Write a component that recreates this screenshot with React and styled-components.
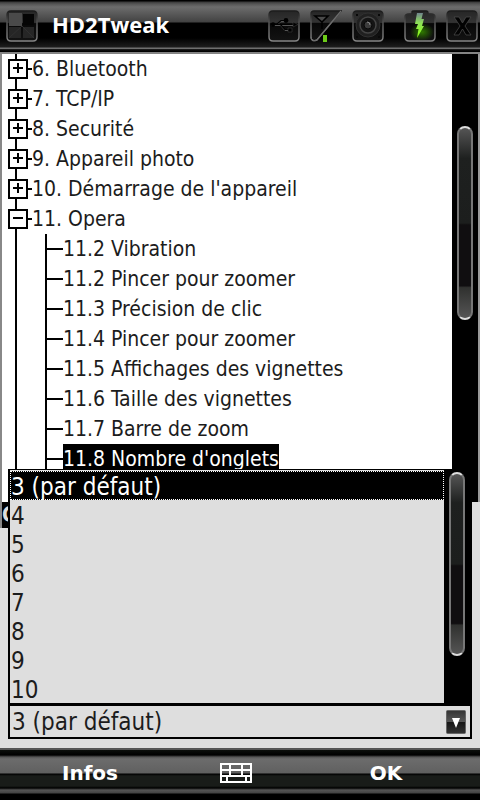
import styled, { createGlobalStyle } from "styled-components";

const GlobalStyle = createGlobalStyle`
  * {
    box-sizing: border-box;
  }

  body {
    margin: 0;
    background: #dedede;
    color: #1c1c1c;
    font-family: "DejaVu Sans Condensed", "DejaVu Sans", sans-serif;
    font-size: 21px;
  }

  button,
  select {
    font: inherit;
    color: inherit;
  }
`;

const Screen = styled.div`
  display: flex;
  flex-direction: column;
  height: 100vh;
  overflow: hidden;
`;

const TitleBar = styled.header`
  flex: none;
  display: flex;
  align-items: center;
  gap: 10px;
  height: 54px;
  padding: 0 2px 0 6px;
  border-bottom: 2px solid #848484;
  background: linear-gradient(
    #000 0,
    #000 1px,
    #3a3a3a 2px,
    #555 4px,
    #6c6c6c 7px,
    #424242 22px,
    #000 23px,
    #000 38px,
    #1d1d1d 47px,
    #6f6f6f 48px,
    #6f6f6f 49px,
    #222 49px,
    #000 51px
  );
`;

const Title = styled.h1`
  flex: 1;
  margin: 0 0 4px 4px;
  color: #fff;
  font-family: "Open Sans", "Noto Sans", sans-serif;
  font-size: 22px;
  font-weight: 700;
  line-height: 32px;
`;

const BarButton = styled.button`
  display: block;
  width: 32px;
  height: 32px;
  margin-left: ${(props) => props.$gap || 0}px;
  padding: 0;
  border: 0;
  background: none;

  svg {
    display: block;
  }
`;

const TreePane = styled.section`
  flex: 1;
  display: flex;
  min-height: 0;
  border-right: 2px solid #9a9a9a;
  border-left: 2px solid #888;
  background: #fff;
`;

const Tree = styled.ul`
  flex: 1;
  margin: 0;
  padding: 0 0 0 6px;
  overflow: hidden;
  list-style: none;
  line-height: 30px;
  white-space: nowrap;
`;

const Node = styled.li`
  background: linear-gradient(#000, #000) 7px 0 / 2px 100% no-repeat;
`;

const NodeRow = styled.div`
  display: flex;
  align-items: center;
  height: 30px;
`;

const Toggle = styled.button`
  display: grid;
  place-items: center;
  width: 20px;
  height: 20px;
  padding: 0;
  border: 2px solid #000;
  background: #fff;
`;

const Dash = styled.span`
  width: ${(props) => props.$width}px;
  height: 2px;
  background: #000;
`;

const Branch = styled.ul`
  margin: 0;
  padding: 0 0 0 37px;
  list-style: none;
`;

const Leaf = styled.li`
  display: flex;
  align-items: center;
  height: 30px;
  border-left: 2px solid #000;
`;

const LeafText = styled.span`
  height: 30px;
  color: ${(props) => (props.$selected ? "#fff" : "inherit")};
  background: ${(props) => (props.$selected ? "#000" : "none")};
`;

const Track = styled.div`
  flex: none;
  width: 26px;
  padding: ${(props) => props.$top}px 5px 0;
  background: #000;
`;

const Thumb = styled.div`
  height: ${(props) => props.$height}px;
  border: 2px solid #777;
  border-top-color: #ddd;
  border-bottom-color: #ddd;
  border-radius: 8px;
  background: linear-gradient(#555, #1e201f 16%, #1c1e1d 50%, #100e10 51%, #100e10 83%, #30312f 84%, #555);
`;

const Detail = styled.section`
  flex: none;
  height: 246px;
`;

const Caption = styled.h2`
  width: 8px;
  height: 26px;
  margin: 0;
  overflow: hidden;
  border-left: 2px solid #888;
  color: #ddd;
  background: #000;
  font-size: 21px;
  line-height: 26px;
`;

const ComboBox = styled.div`
  position: absolute;
  right: 8px;
  bottom: 61px;
  left: 8px;
  border: 2px solid #000;
  border-top-width: 1px;
  background: #dedede;
  font-size: 24px;
`;

const Popup = styled.div`
  display: flex;
  border-bottom: 3px solid #000;
`;

const Options = styled.ul`
  flex: 1;
  margin: 0;
  padding: 1px 0 0;
  list-style: none;
`;

const Option = styled.li`
  height: 29px;
  padding-left: 1px;
  line-height: 33px;
  color: ${(props) => (props.$selected ? "#fff" : "inherit")};
  background: ${(props) => (props.$selected ? "#000" : "none")};
  outline: ${(props) => (props.$selected ? "1px dotted #fff" : "none")};
  outline-offset: -1px;
`;

const Field = styled.label`
  display: flex;
  align-items: center;
  height: 31px;
  padding-right: 4px;
`;

const Select = styled.select`
  flex: 1;
  padding: 0 0 0 2px;
  border: 0;
  background: none;
  appearance: none;
`;

const SoftKeys = styled.footer`
  flex: none;
  display: grid;
  grid-template-columns: 176px 1fr 184px;
  align-items: center;
  height: 52px;
  padding: 0 2px 2px;
  background: linear-gradient(
    #555 0,
    #555 2px,
    #0c0f0c 2px,
    #000 7px,
    #555 9px,
    #6c6c6c 11px,
    #606060 25px,
    #000 26px,
    #191c19 28px,
    #191c19 38px,
    #000 40px,
    #555 42px,
    #444 45px,
    #000 46px
  );
`;

const SoftKey = styled.button`
  display: grid;
  place-items: center;
  height: 32px;
  padding: 0;
  border: 0;
  color: #fff;
  background: none;
  font-family: "DejaVu Sans", sans-serif;
  font-size: 20px;
  font-weight: 700;
`;

const nodes = [
  { label: "6. Bluetooth" },
  { label: "7. TCP/IP" },
  { label: "8. Securité" },
  { label: "9. Appareil photo" },
  { label: "10. Démarrage de l'appareil" },
  {
    label: "11. Opera",
    children: [
      "11.2 Vibration",
      "11.2 Pincer pour zoomer",
      "11.3 Précision de clic",
      "11.4 Pincer pour zoomer",
      "11.5 Affichages des vignettes",
      "11.6 Taille des vignettes",
      "11.7 Barre de zoom",
      "11.8 Nombre d'onglets",
    ],
  },
];

const options = ["3 (par défaut)", "4", "5", "6", "7", "8", "9", "10"];

const Tile = ({ shape, children }) => (
  <svg width="32" height="32" viewBox="0 0 32 32">
    <defs>
      <linearGradient id="tile" x1="0" y1="0" x2="0" y2="1">
        <stop offset="0" stopColor="#262626" />
        <stop offset="0.38" stopColor="#333" />
        <stop offset="0.42" stopColor="#080808" />
        <stop offset="1" stopColor="#131313" />
      </linearGradient>
      <linearGradient id="edge" x1="0" y1="0" x2="0" y2="1">
        <stop offset="0" stopColor="#1a1a1a" />
        <stop offset="0.5" stopColor="#666" />
        <stop offset="1" stopColor="#858585" />
      </linearGradient>
    </defs>
    <path
      d={shape || "M5 1H27Q31 1 31 5V27Q31 31 27 31H5Q1 31 1 27V5Q1 1 5 1Z"}
      fill="url(#tile)"
      stroke="url(#edge)"
      strokeWidth="1.4"
    />
    {children}
  </svg>
);

const StartIcon = () => (
  <Tile>
    <path d="M3 3H16V16H3Z" fill="#4a4a4a" />
    <path d="M17 4H28V15H17Z" fill="#050505" />
    <path d="M3 17H15V28H3ZM17 17H28V28H17Z" fill="#262626" />
    <path d="M3 28L16 16L28 28" fill="none" stroke="#303030" />
  </Tile>
);

const UsbIcon = () => (
  <Tile>
    <path
      d="M3 15.5H27M9 15L13 11.5H18M12 15L17 20.5H21"
      fill="none"
      stroke="#555"
      strokeWidth="1"
    />
    <path d="M3 14.5H27M9 14L13 10.5H18M12 14L17 19.5H21" fill="none" stroke="#000" strokeWidth="1.2" />
    <circle cx="5" cy="14.5" r="2.2" />
    <circle cx="18" cy="10.5" r="2.4" />
    <path d="M20 18H24V22H20ZM25 12L30 14.5L25 17Z" stroke="#444" strokeWidth="0.5" />
  </Tile>
);

const SignalIcon = () => (
  <Tile shape="M4 1H31L7 30Q1 32 1 27V4Q1 1 4 1Z">
    <path d="M1 27Q1 32 7 30L31 1" fill="none" stroke="#6c6c6c" strokeWidth="1.2" />
    <path d="M5 6H18L12 12ZM12 12V19" fill="#4a4a4a" stroke="#000" strokeWidth="1.6" />
    <path d="M13 25H17V32H13Z" fill="#6ccb19" />
  </Tile>
);

const SoundIcon = () => (
  <Tile>
    <circle cx="16" cy="15" r="12" fill="#202020" stroke="#303030" />
    <circle cx="16" cy="15" r="8" fill="#151515" stroke="#454545" strokeWidth="1.5" />
    <circle cx="16" cy="15" r="4" fill="#3c3c3c" stroke="#090909" />
    <path d="M15 12Q18 12 18 15" fill="none" stroke="#888" />
    <path d="M4 4H6V6H4ZM26 4H28V6H26ZM4 26H6V28H4ZM26 26H28V28H26Z" fill="#090909" />
  </Tile>
);

const BatteryIcon = () => (
  <Tile shape="M5 4H8V2Q8 1 10 1H22Q24 1 24 3V4H27Q31 4 31 7V27Q31 31 27 31H5Q1 31 1 27V7Q1 4 5 4Z">
    <defs>
      <radialGradient id="glow">
        <stop offset="0" stopColor="#2f7a00" />
        <stop offset="1" stopColor="#2f7a00" stopOpacity="0" />
      </radialGradient>
      <linearGradient id="bolt" x1="0" y1="0" x2="0" y2="1">
        <stop offset="0" stopColor="#71858e" />
        <stop offset="0.4" stopColor="#8de056" />
        <stop offset="1" stopColor="#8eff12" />
      </linearGradient>
    </defs>
    <ellipse cx="18" cy="22" rx="12" ry="9" fill="url(#glow)" />
    <path d="M13 3H19L17.5 9H20L18 16H20L13 28L14.5 19H12L14 14H11Z" fill="url(#bolt)" />
  </Tile>
);

const CloseIcon = () => (
  <Tile>
    <path
      d="M8 7H13L16.5 13L20 7H25L19 16L25 25H20L16.5 19L13 25H8L14 16Z"
      fill="#020202"
      stroke="#484848"
      strokeWidth="0.8"
    />
  </Tile>
);

const ToggleMark = ({ open }) => (
  <svg width="12" height="12" viewBox="0 0 12 12" stroke="#000" strokeWidth="2">
    <path d={open ? "M1 5H11" : "M1 5H11M6 0V10"} />
  </svg>
);

const KeyboardIcon = () => (
  <svg width="32" height="20" viewBox="0 0 32 20" fill="none" stroke="#fff" strokeWidth="2">
    <path d="M1 1H31V19H1ZM1 7H31M1 13H31M10 1V13M22 1V13M7 13V19M26 13V19" />
  </svg>
);

const ArrowIcon = () => (
  <svg width="20" height="24" viewBox="0 0 20 24">
    <defs>
      <linearGradient id="arrow" x1="0" y1="0" x2="0" y2="1">
        <stop offset="0" stopColor="#333" />
        <stop offset="0.48" stopColor="#555" />
        <stop offset="0.52" stopColor="#171717" />
        <stop offset="1" stopColor="#333" />
      </linearGradient>
    </defs>
    <rect x="0.5" y="0.5" width="19" height="23" rx="1" fill="url(#arrow)" stroke="#666" />
    <path d="M6 8H14L10 18Z" fill="#fff" />
  </svg>
);

const App = () => {
  return (
    <>
      <GlobalStyle />
      <Screen>
        <TitleBar>
          <BarButton aria-label="Start">
            <StartIcon />
          </BarButton>
          <Title>HD2Tweak</Title>
          <BarButton aria-label="USB">
            <UsbIcon />
          </BarButton>
          <BarButton aria-label="Signal">
            <SignalIcon />
          </BarButton>
          <BarButton aria-label="Volume">
            <SoundIcon />
          </BarButton>
          <BarButton aria-label="Battery" $gap={10}>
            <BatteryIcon />
          </BarButton>
          <BarButton aria-label="Close">
            <CloseIcon />
          </BarButton>
        </TitleBar>

        <TreePane>
          <Tree>
            {nodes.map((node) => (
              <Node key={node.label}>
                <NodeRow>
                  <Toggle aria-label={node.label}>
                    <ToggleMark open={!!node.children} />
                  </Toggle>
                  <Dash $width={4} />
                  {node.label}
                </NodeRow>
                {node.children && (
                  <Branch>
                    {node.children.map((child, index) => (
                      <Leaf key={child}>
                        <Dash $width={16} />
                        <LeafText $selected={index === 7}>{child}</LeafText>
                      </Leaf>
                    ))}
                  </Branch>
                )}
              </Node>
            ))}
          </Tree>
          <Track $top={72}>
            <Thumb $height={194} />
          </Track>
        </TreePane>

        <Detail>
          <Caption>C</Caption>
        </Detail>

        <ComboBox>
          <Popup>
            <Options>
              {options.map((option, index) => (
                <Option key={option} $selected={index === 0}>
                  {option}
                </Option>
              ))}
            </Options>
            <Track $top={2}>
              <Thumb $height={184} />
            </Track>
          </Popup>
          <Field>
            <Select aria-label="Nombre d'onglets">
              {options.map((option) => (
                <option key={option}>{option}</option>
              ))}
            </Select>
            <ArrowIcon />
          </Field>
        </ComboBox>

        <SoftKeys>
          <SoftKey>Infos</SoftKey>
          <SoftKey aria-label="Keyboard">
            <KeyboardIcon />
          </SoftKey>
          <SoftKey>OK</SoftKey>
        </SoftKeys>
      </Screen>
    </>
  );
};

export default App;
